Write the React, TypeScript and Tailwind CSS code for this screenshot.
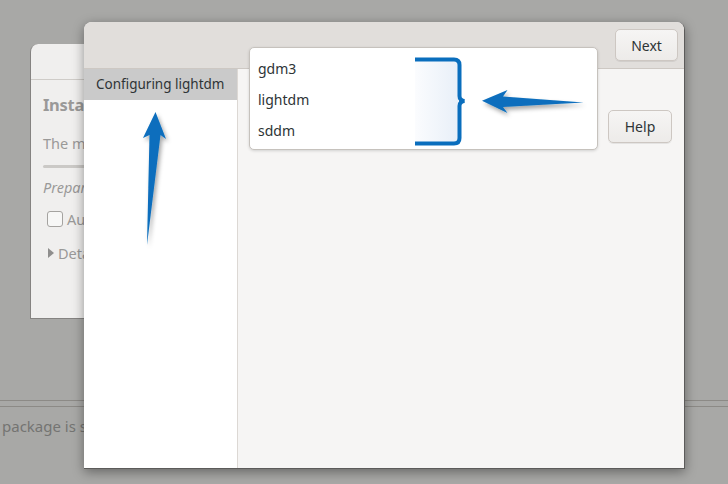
import React from "react";

const font = { fontFamily: '"Noto Sans", "Open Sans", sans-serif' };

function BackWindow() {
  return (
    <div className="absolute left-[30px] top-[44px] w-[300px] h-[275px] rounded-tl-[8px] bg-[#f0efee] border-l border-b border-[#858381] overflow-hidden">
      <div className="h-[36px] border-b border-[#cfccc8]" />
      <div className="px-[12px] text-[#9a9998]">
        <div className="mt-[14px] text-[16.5px] font-bold leading-[22px] tracking-[-0.3px]">Installing packages</div>
        <div className="mt-[17px] text-[14.5px] leading-[20px]">The machine is being prepared</div>
        <div className="mt-[12px] h-[3px] w-[200px] rounded-full bg-[#cbc9c6]" />
        <div className="mt-[9px] text-[14.5px] italic leading-[20px]">Preparing to install</div>
        <div className="mt-[12px] flex items-center gap-[4px] pl-[4px] text-[14.5px] leading-[20px]">
          <span className="inline-block w-[16px] h-[16px] rounded-[3px] border border-[#a5a3a0] bg-[#f7f7f6]" />
          <span>Automatically close</span>
        </div>
        <div className="mt-[14px] flex items-center gap-[4px] pl-[5px] text-[14.5px] leading-[20px]">
          <span className="inline-block w-0 h-0 border-y-[5px] border-y-transparent border-l-[6px] border-l-[#8f8e8d]" />
          <span>Details</span>
        </div>
      </div>
    </div>
  );
}

function Annotations() {
  return (
    <svg className="absolute left-0 top-0 pointer-events-none" width="728" height="484" viewBox="0 0 728 484">
      <defs>
        <linearGradient id="fill" x1="0" x2="1" y1="0" y2="0">
          <stop offset="0" stopColor="#fbfcfe" />
          <stop offset="1" stopColor="#e8eff8" />
        </linearGradient>
        <filter id="sh" x="-50%" y="-50%" width="200%" height="200%">
          <feDropShadow dx="2" dy="3" stdDeviation="2.2" floodColor="#000" floodOpacity="0.35" />
        </filter>
      </defs>
      <rect x="415" y="60" width="43" height="83" fill="url(#fill)" />
      <path
        d="M415 59.5 H454 Q459.5 59.5 459.5 65 V96 Q459.5 100.5 464.5 101 Q459.5 101.5 459.5 106 V138 Q459.5 143.5 454 143.5 H415"
        fill="none"
        stroke="#0a6ebd"
        strokeWidth="4"
      />
      <g filter="url(#sh)" fill="#0a6ebd">
        <polygon points="155.5,112 166,139 160.5,135 147,245 149.5,135 143,138" />
        <polygon points="482,100.7 507.5,90 503,96.5 583.5,102.5 503,107 507.5,113" />
      </g>
    </svg>
  );
}

export default function App() {
  return (
    <div className="relative w-[728px] h-[484px] overflow-hidden bg-[#a8a8a6]" style={font}>
      <div className="flex flex-col">
        <div className="h-[400px]" />
        <div className="h-[7px] border-t border-b border-[#8c8a86]" />
        <div className="pl-[2px] pt-[8px] text-[15px] leading-[22px] text-[#747472] whitespace-nowrap">
          package is selected for installation
        </div>
      </div>

      <BackWindow />

      <div className="absolute left-[84px] top-[22px] w-[601px] h-[447px] flex flex-col rounded-t-[8px] bg-[#f6f5f4] border-r border-b border-[#5c5b5a] shadow-[0_3px_12px_rgba(0,0,0,0.4)] overflow-hidden">
        <div className="h-[47px] shrink-0 flex items-start justify-end pt-[7px] pr-[6px] bg-[#e1dedb] border-b border-[#cdc8c3]">
          <button className="w-[63px] h-[32px] rounded-[5px] border border-[#cdc7c2] bg-gradient-to-b from-[#f6f5f4] to-[#edebe9] text-[14px] text-[#2e3436] shadow-[0_1px_0_rgba(0,0,0,0.07)]">
            Next
          </button>
        </div>
        <div className="flex flex-1">
          <div className="w-[154px] bg-white border-r border-[#dcd8d4]">
            <div className="h-[31px] flex items-center pl-[12px] bg-[#cacaca] text-[13.5px] text-[#2e3436] whitespace-nowrap">
              Configuring lightdm
            </div>
          </div>
          <div className="flex-1 flex justify-end items-start pt-[41px] pr-[12px]">
            <button className="w-[64px] h-[33px] rounded-[5px] border border-[#cdc7c2] bg-gradient-to-b from-[#f6f5f4] to-[#edebe9] text-[14px] text-[#2e3436] shadow-[0_1px_0_rgba(0,0,0,0.07)]">
              Help
            </button>
          </div>
        </div>

        <div className="absolute left-[165px] top-[25px] w-[349px] h-[103px] rounded-[5px] bg-white border border-[#c6c2bd] shadow-[0_1px_3px_rgba(0,0,0,0.15)] py-[5px]">
          {["gdm3", "lightdm", "sddm"].map((t) => (
            <div key={t} className="h-[31px] flex items-center pl-[8px] text-[14px] text-[#2e3436]">
              {t}
            </div>
          ))}
        </div>
      </div>

      <Annotations />
    </div>
  );
}
